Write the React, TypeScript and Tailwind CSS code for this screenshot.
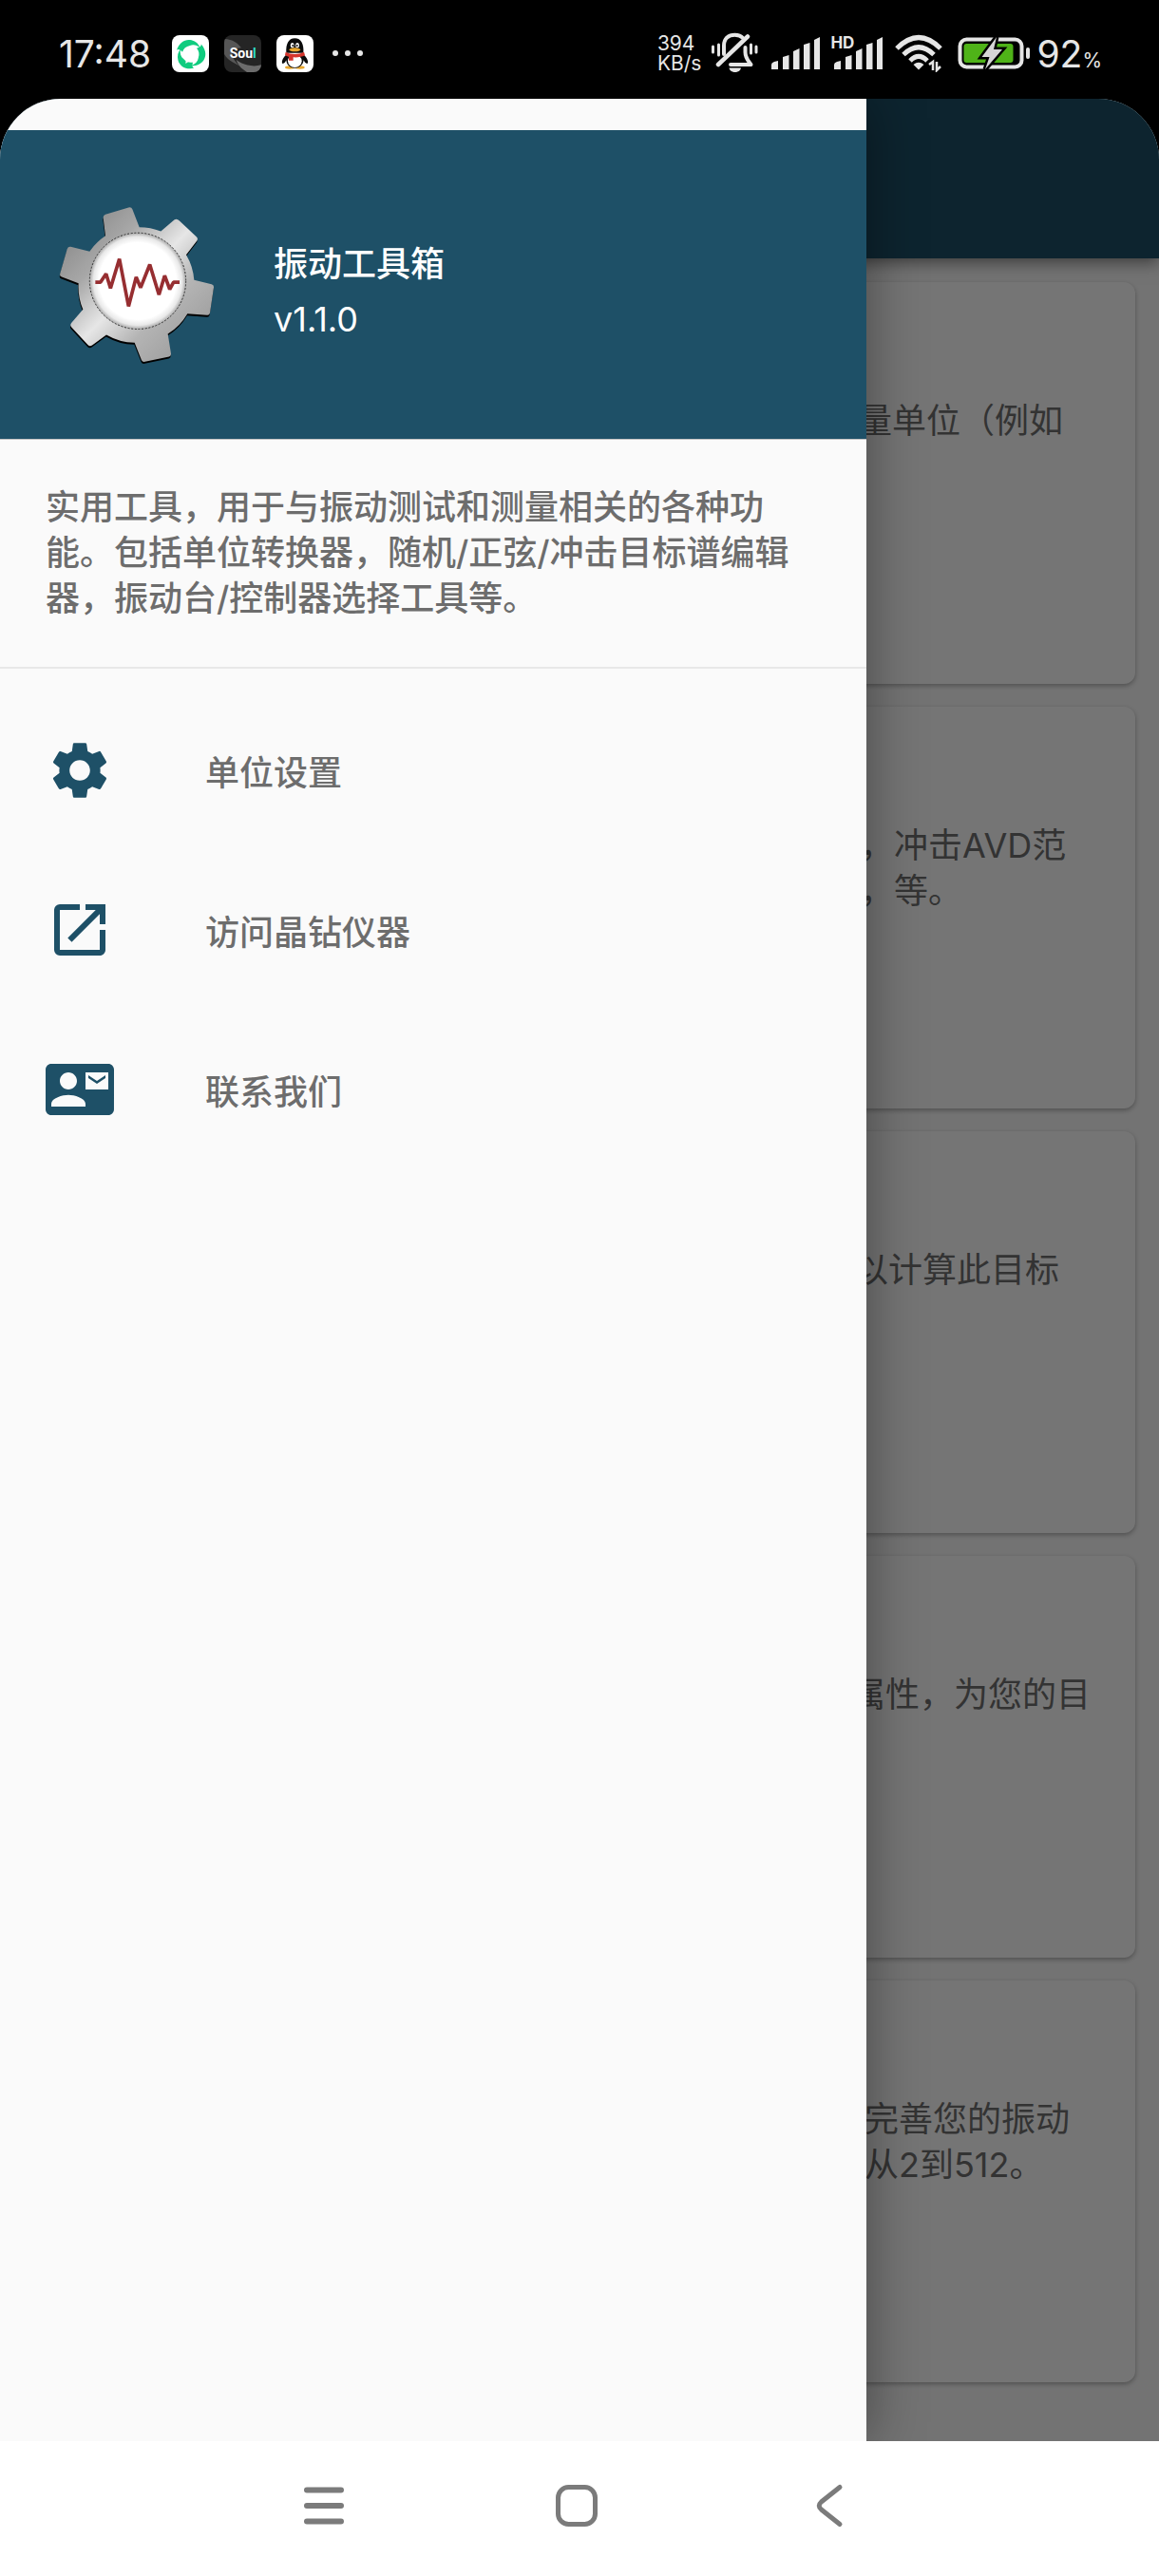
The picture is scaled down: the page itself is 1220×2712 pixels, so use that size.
import type { ReactNode } from "react";
import { MdContactMail, MdOpenInNew, MdSettings } from "react-icons/md";

const GEAR_PATH =
  "M333 352L326 296Q325 288 333 285L406 263Q415 261 418 268L440 325A183 183 0 0 1 508 338L550 302Q558 296 566 304L621 356Q626 361 622 368L588 412A183 183 0 0 1 613 492L668 505Q676 507 675 515L663 596Q661 604 654 603L592 598A183 183 0 0 1 530 662L540 724Q541 732 534 734L458 750Q450 752 447 745L425 690A183 183 0 0 1 336 665L292 697Q284 703 278 697L225 640Q220 634 226 627L262 585A183 183 0 0 1 248 502L195 482Q187 479 190 471L212 394Q215 386 223 387L283 402A183 183 0 0 1 333 352Z";

function AppLogo() {
  return (
    <svg viewBox="180 250 504 512" className="h-[171px] w-[168px] shrink-0" aria-hidden="true">
      <defs>
        <linearGradient id="metal" gradientUnits="userSpaceOnUse" x1="260" y1="340" x2="600" y2="670">
          <stop offset="0" stopColor="#929292" />
          <stop offset="0.22" stopColor="#a8a8a8" />
          <stop offset="0.5" stopColor="#e6e6e6" />
          <stop offset="0.75" stopColor="#b4b4b4" />
          <stop offset="1" stopColor="#a2a2a2" />
        </linearGradient>
        <radialGradient id="dial">
          <stop offset="0.8" stopColor="#fff" />
          <stop offset="0.92" stopColor="#e8e8e8" />
          <stop offset="1" stopColor="#a9a9a9" />
        </radialGradient>
      </defs>
      <path d={GEAR_PATH} fill="#000" transform="translate(-1 6)" />
      <path d={GEAR_PATH} fill="url(#metal)" />
      <circle cx="435" cy="495" r="152" fill="url(#dial)" stroke="#333" strokeWidth="3" strokeDasharray="6 5" />
      <path
        d="M301 499H317L335 472L349 518L377 425L406 575L430 483L444 516L473 443L502 538L520 478L536 521L548 499H567"
        fill="none"
        stroke="#962e31"
        strokeWidth="11"
        strokeLinejoin="bevel"
      />
    </svg>
  );
}

function SwirlIcon() {
  const blade = "M15 47C24 21 43 11 62 16C76 20 85 29 89 40C78 31 67 29 57 33C44 36 37 42 33 53C26 46 20 43 15 47Z";
  return (
    <svg viewBox="0 0 117 117" className="size-[39px]" aria-hidden="true">
      <rect width="117" height="117" rx="24" fill="#fff" />
      <g fill="#10cc7f">
        <path d={blade} />
        <path d={blade} transform="rotate(120 59 60)" />
        <path d={blade} transform="rotate(240 59 60)" />
      </g>
      <path d="M44 78L43 90L55 82Z" fill="#fff" />
    </svg>
  );
}

function SoulIcon() {
  return (
    <span className="relative flex size-[39px] items-center justify-center overflow-hidden rounded-lg bg-[#252525] font-[Roboto] text-sm font-bold text-white">
      <svg viewBox="0 0 117 117" className="absolute inset-0 size-full" aria-hidden="true">
        <path d="M0 12C28 14 42 24 54 40L26 44C20 64 32 82 50 98C38 90 14 84 0 60Z" fill="#565656" />
        <path d="M38 78C58 94 90 102 117 94V117H72C56 108 44 96 38 78Z" fill="#6c6c6c" />
      </svg>
      <span className="relative">
        Sou<span className="text-[#2fd9c8]">l</span>
      </span>
    </span>
  );
}

function PenguinIcon() {
  return (
    <svg viewBox="0 0 117 117" className="size-[39px]" aria-hidden="true">
      <rect width="117" height="117" rx="24" fill="#fff" />
      <ellipse cx="42" cy="102" rx="15" ry="5" fill="#e8a62c" />
      <ellipse cx="74" cy="102" rx="15" ry="5" fill="#e8a62c" />
      <path d="M31 62C20 70 14 86 20 90C25 90 29 84 31 79C32 94 42 104 58 104C74 104 84 94 86 79C88 84 92 90 97 90C103 86 97 70 86 62Z" fill="#0b0b0b" />
      <ellipse cx="58" cy="82" rx="22" ry="20" fill="#fff" />
      <path d="M31 56C29 28 38 10 58 10C78 10 87 28 85 56Z" fill="#0b0b0b" />
      <ellipse cx="50" cy="32" rx="6" ry="8" fill="#fff" />
      <ellipse cx="66" cy="32" rx="6" ry="8" fill="#fff" />
      <circle cx="52" cy="33" r="3" fill="#000" />
      <circle cx="65" cy="33" r="3" fill="#000" />
      <ellipse cx="58" cy="46" rx="18" ry="6" fill="#e8a62c" />
      <path d="M29 53C46 62 70 62 87 53L90 64C80 69 66 71 53 70V80H39V68C34 67 30 65 27 63Z" fill="#d5352c" />
    </svg>
  );
}

function MutedBell() {
  return (
    <svg viewBox="0 0 52 44" className="h-[44px] w-[52px]" fill="none" stroke="#e6e6e6" strokeLinecap="round" aria-hidden="true">
      <path d="M14 23V14C14 6 19 2.800 25.500 2.800C29 2.800 32 3.800 34 6" strokeWidth="4" />
      <path d="M39 4.500L8 34" strokeWidth="4.500" />
      <path d="M36.500 16V21C36.500 27 39 29 42.500 34H21" strokeWidth="4" strokeLinejoin="round" />
      <path d="M19.500 37.500H32C31 43.500 20.500 43.500 19.500 37.500Z" fill="#e6e6e6" stroke="none" />
      <path d="M2.500 15V21M8.500 13V24M42.500 13V22M48 15V21" strokeWidth="3" />
    </svg>
  );
}

function SignalBars() {
  return (
    <svg viewBox="0 0 52 34" className="h-[34px] w-[52px]" fill="#e6e6e6" aria-hidden="true">
      <path d="M0 34V29Q0 27 3 26L7 25V34ZM12 34V21L18.500 19V34ZM23 34V15L29.500 12V34ZM34 34V8L40.500 6V34ZM45 34V3L51 0V34Z" />
    </svg>
  );
}

function Wifi() {
  return (
    <svg viewBox="0 0 52 40" className="h-[40px] w-[52px]" fill="none" stroke="#e6e6e6" strokeWidth="5" aria-hidden="true">
      <path d="M2 15Q25 -8 48 15" />
      <path d="M9 21.500Q25 6 41 21.500" />
      <path d="M16 28Q25 19 34 28" />
      <path d="M19.500 32Q25 27.500 30.500 32L25 37.500Z" fill="#e6e6e6" stroke="none" />
      <path d="M36 32L40 29V38M48 34L44 38V29" strokeWidth="2.500" />
    </svg>
  );
}

function Battery() {
  const bolt = "M41 0L25.500 21H33.500L29 34L47 13H38Z";
  return (
    <svg viewBox="0 0 77 34" className="h-[34px] w-[77px]" aria-hidden="true">
      <rect x="2.500" y="2.500" width="65" height="29" rx="7" fill="none" stroke="#e6e6e6" strokeWidth="4" />
      <rect x="6.500" y="7" width="52" height="20" rx="3" fill="#4fb318" />
      <path d={bolt} fill="#d6d6d6" stroke="#000" strokeWidth="5" />
      <path d={bolt} fill="#d6d6d6" />
      <rect x="72" y="11" width="4" height="12" rx="2" fill="#e6e6e6" />
    </svg>
  );
}

function StatusBar() {
  return (
    <header className="flex h-[104px] items-center bg-black pt-2 pr-[60px] pl-[62px] text-[#e6e6e6]">
      <time className="text-[39px] leading-none">17:48</time>
      <div className="ml-[22px] flex items-center gap-4">
        <SwirlIcon />
        <SoulIcon />
        <PenguinIcon />
      </div>
      <div className="ml-5 flex gap-[7px]" aria-label="更多通知">
        <span className="size-[6px] rounded-full bg-current" />
        <span className="size-[6px] rounded-full bg-current" />
        <span className="size-[6px] rounded-full bg-current" />
      </div>
      <div className="ml-auto flex items-center">
        <div className="text-[21px] leading-[21px]">
          <p>394</p>
          <p>KB/s</p>
        </div>
        <div className="ml-[10px]">
          <MutedBell />
        </div>
        <div className="ml-3">
          <SignalBars />
        </div>
        <div className="relative ml-[14px]">
          <SignalBars />
          <span className="absolute -top-[2px] -left-[4px] bg-black text-[17px] leading-4 font-bold">HD</span>
        </div>
        <div className="ml-3">
          <Wifi />
        </div>
        <div className="ml-[14px]">
          <Battery />
        </div>
        <p className="ml-[6px] flex items-baseline text-[39px] leading-none">
          92<span className="text-[21px]">%</span>
        </p>
      </div>
    </header>
  );
}

type CardData = { indent: string; lines: string[] };

const CARDS: CardData[] = [
  { indent: "pl-[878px]", lines: ["量单位（例如"] },
  { indent: "pl-[880px]", lines: ["，冲击AVD范", "，等。"] },
  { indent: "pl-[874px]", lines: ["以计算此目标"] },
  { indent: "pl-[871px]", lines: ["属性，为您的目"] },
  { indent: "pl-[885px]", lines: ["完善您的振动", "从2到512。"] },
];

function ToolCard({ indent, lines }: CardData) {
  return (
    <article className={`min-h-[423px] rounded-xl bg-white pt-[122px] shadow-[0_2px_5px_rgba(0,0,0,0.3)] ${indent}`}>
      {lines.map((line) => (
        <p key={line} className="whitespace-nowrap text-[#707070]">
          {line}
        </p>
      ))}
    </article>
  );
}

function MenuItem({ icon, label }: { icon: ReactNode; label: string }) {
  return (
    <li>
      <a href="#" className="flex h-[168px] items-center gap-24 px-12 font-medium text-[#6d6d6d]">
        <span className="text-[72px] text-[#1e5067]">{icon}</span>
        <span className="pt-[6px]">{label}</span>
      </a>
    </li>
  );
}

function Drawer() {
  return (
    <aside className="absolute inset-y-0 left-0 w-[912px] bg-[#fafafa] pt-[33px] shadow-[0_0_56px_rgba(0,0,0,0.4)]">
      <div className="flex h-[326px] items-center gap-[60px] border-b border-[#c4c4c4] bg-[#1e5067] px-[60px] text-white">
        <AppLogo />
        <div className="pt-[14px] leading-[58px]">
          <h1 className="font-medium">振动工具箱</h1>
          <p>v1.1.0</p>
        </div>
      </div>
      <p className="border-b-2 border-[#e8e8e8] px-12 pt-[47px] pb-12 font-medium text-[#6d6d6d]">
        实用工具，用于与振动测试和测量相关的各种功
        <br />
        能。包括单位转换器，随机/正弦/冲击目标谱编辑
        <br />
        器，振动台/控制器选择工具等。
      </p>
      <ul className="pt-[23px]">
        <MenuItem icon={<MdSettings />} label="单位设置" />
        <MenuItem icon={<MdOpenInNew />} label="访问晶钻仪器" />
        <MenuItem icon={<MdContactMail />} label="联系我们" />
      </ul>
    </aside>
  );
}

function SystemNav() {
  const button = "flex w-[266px] items-center justify-center";
  return (
    <nav className="flex h-[142px] justify-center bg-white pr-[6px] pb-[6px]">
      <button type="button" aria-label="最近任务" className={button}>
        <svg viewBox="0 0 48 48" className="size-12" stroke="#7b7b7b" strokeWidth="6" strokeLinecap="round">
          <path d="M6 7.500H42M6 24H42M6 40.500H42" />
        </svg>
      </button>
      <button type="button" aria-label="主屏幕" className={button}>
        <svg viewBox="0 0 48 48" className="size-12" fill="none" stroke="#7b7b7b" strokeWidth="5">
          <rect x="4.500" y="4.500" width="39" height="39" rx="11" />
        </svg>
      </button>
      <button type="button" aria-label="返回" className={button}>
        <svg viewBox="0 0 48 48" className="size-12" fill="none" stroke="#7b7b7b" strokeWidth="5" strokeLinecap="round">
          <path d="M35 4.500L15.500 20Q11 24 15.500 28L35 43.500" />
        </svg>
      </button>
    </nav>
  );
}

export default function App() {
  return (
    <div
      lang="zh-CN"
      className="flex min-h-screen flex-col bg-black font-['Inter','Noto_Sans_CJK_SC',sans-serif] text-[36px] leading-[48px]"
    >
      <StatusBar />
      <main className="relative overflow-hidden rounded-t-[64px] bg-[#fafafa]">
        <div className="relative h-[168px] bg-[#1e5067] shadow-[0_4px_16px_rgba(0,0,0,0.5)]" />
        <section className="flex flex-col gap-6 px-[25px] pt-[25px] pb-[62px]">
          {CARDS.map((card) => (
            <ToolCard key={card.lines[0]} {...card} />
          ))}
        </section>
        <button type="button" aria-label="关闭菜单" className="absolute inset-0 bg-black/54" />
        <Drawer />
      </main>
      <SystemNav />
    </div>
  );
}
